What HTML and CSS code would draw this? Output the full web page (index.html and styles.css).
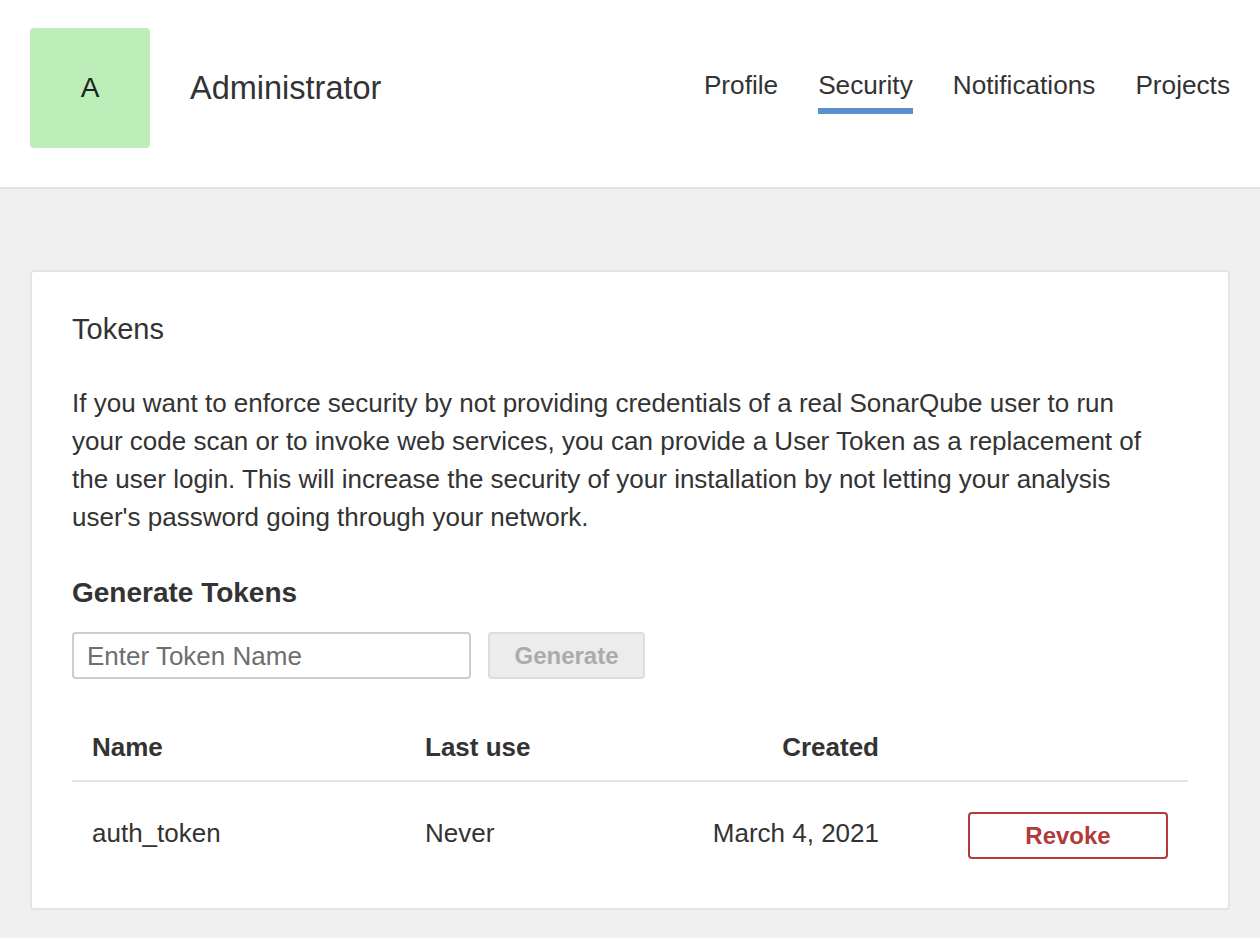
FILE: index.html
```html
<!DOCTYPE html>
<html lang="en">
<head>
<meta charset="utf-8">
<title>My Account - Security</title>
<link rel="stylesheet" href="styles.css">
</head>
<body>
<header class="account-header">
  <div class="user">
    <div class="avatar">A</div>
    <h1 class="user-name">Administrator</h1>
  </div>
  <nav class="tabs">
    <a class="tab">Profile</a>
    <a class="tab active">Security</a>
    <a class="tab">Notifications</a>
    <a class="tab">Projects</a>
  </nav>
</header>
<main class="page">
  <section class="card">
    <h2 class="card-title">Tokens</h2>
    <p class="intro">If you want to enforce security by not providing credentials of a real SonarQube user to run your code scan or to invoke web services, you can provide a User Token as a replacement of the user login. This will increase the security of your installation by not letting your analysis user's password going through your network.</p>
    <h3 class="sub-title">Generate Tokens</h3>
    <form class="generate-form">
      <input class="token-input" type="text" placeholder="Enter Token Name">
      <button class="btn-generate" type="button" disabled>Generate</button>
    </form>
    <table class="tokens">
      <colgroup>
        <col class="c-name">
        <col class="c-last">
        <col class="c-created">
        <col class="c-action">
      </colgroup>
      <thead>
        <tr>
          <th>Name</th>
          <th>Last use</th>
          <th class="right">Created</th>
          <th></th>
        </tr>
      </thead>
      <tbody>
        <tr>
          <td>auth_token</td>
          <td>Never</td>
          <td class="right">March 4, 2021</td>
          <td class="right action-cell"><button class="btn-revoke" type="button">Revoke</button></td>
        </tr>
      </tbody>
    </table>
  </section>
</main>
</body>
</html>
```
FILE: styles.css
```css
* { box-sizing: border-box; }
html, body {
  margin: 0;
  padding: 0;
}
body {
  font-family: "Liberation Sans", Arial, Helvetica, sans-serif;
  color: #333;
  background: #f0f0f0;
  min-height: 938px;
}

.account-header {
  height: 189px;
  background: #fff;
  border-bottom: 2px solid #e3e3e3;
  padding: 28px 30px 0;
  display: flex;
  justify-content: space-between;
  align-items: flex-start;
}
.user {
  display: flex;
  align-items: center;
}
.avatar {
  width: 120px;
  height: 120px;
  border-radius: 4px;
  background: #bdedb9;
  color: #222;
  font-size: 28px;
  display: flex;
  align-items: center;
  justify-content: center;
}
.user-name {
  margin: 0 0 0 40px;
  font-size: 32.5px;
  font-weight: normal;
  line-height: 38px;
  color: #333;
}
.tabs {
  display: flex;
  gap: 40px;
  margin-top: 42px;
}
.tab {
  font-size: 26.2px;
  line-height: 30px;
  color: #333;
  padding-bottom: 8px;
  border-bottom: 6px solid transparent;
  cursor: pointer;
}
.tab.active {
  border-bottom-color: #5b8fcf;
}

.page {
  padding: 81px 30px 28px;
}
.card {
  background: #fff;
  border: 2px solid #e4e4e4;
  border-radius: 4px;
  padding: 40px 40px 20px;
}
.card-title {
  margin: 0 0 38px;
  font-size: 29px;
  line-height: 34px;
  font-weight: normal;
  color: #333;
}
.intro {
  margin: 0;
  max-width: 1085px;
  font-size: 26px;
  line-height: 38px;
  color: #333;
}
.sub-title {
  margin: 41px 0 23px;
  font-size: 28px;
  line-height: 32px;
  font-weight: bold;
  color: #333;
}
.generate-form {
  display: flex;
  gap: 17px;
  margin: 0;
}
.token-input {
  width: 399px;
  height: 47px;
  border: 2px solid #cdcdcd;
  border-radius: 4px;
  padding: 2px 13px 0;
  font-family: inherit;
  font-size: 26px;
  color: #333;
  outline: none;
}
.token-input::placeholder {
  color: #6e6e6e;
}
.btn-generate {
  width: 157px;
  height: 47px;
  border: 2px solid #dcdcdc;
  border-radius: 4px;
  background: #ececec;
  color: #ababab;
  font-family: inherit;
  font-size: 24px;
  font-weight: bold;
  padding: 0;
}

.tokens {
  width: 100%;
  margin-top: 33px;
  border-collapse: collapse;
  table-layout: fixed;
}
.c-name { width: 333px; }
.c-last { width: 245px; }
.c-created { width: 249px; }
.c-action { width: 289px; }
.tokens th {
  text-align: left;
  font-size: 26px;
  line-height: 30px;
  font-weight: bold;
  color: #333;
  padding: 20px 20px 18px;
  border-bottom: 2px solid #e3e3e3;
}
.tokens td {
  font-size: 26px;
  line-height: 30px;
  color: #333;
  padding: 36px 20px 0;
  vertical-align: top;
}
.tokens .right { text-align: right; }
.tokens td.action-cell {
  padding: 30px 20px 29px;
}
.btn-revoke {
  display: inline-block;
  width: 200px;
  height: 47px;
  border: 2px solid #b23a3a;
  border-radius: 4px;
  background: #fff;
  color: #b23a3a;
  font-family: inherit;
  font-size: 24px;
  font-weight: bold;
  padding: 0;
  vertical-align: top;
}
```
